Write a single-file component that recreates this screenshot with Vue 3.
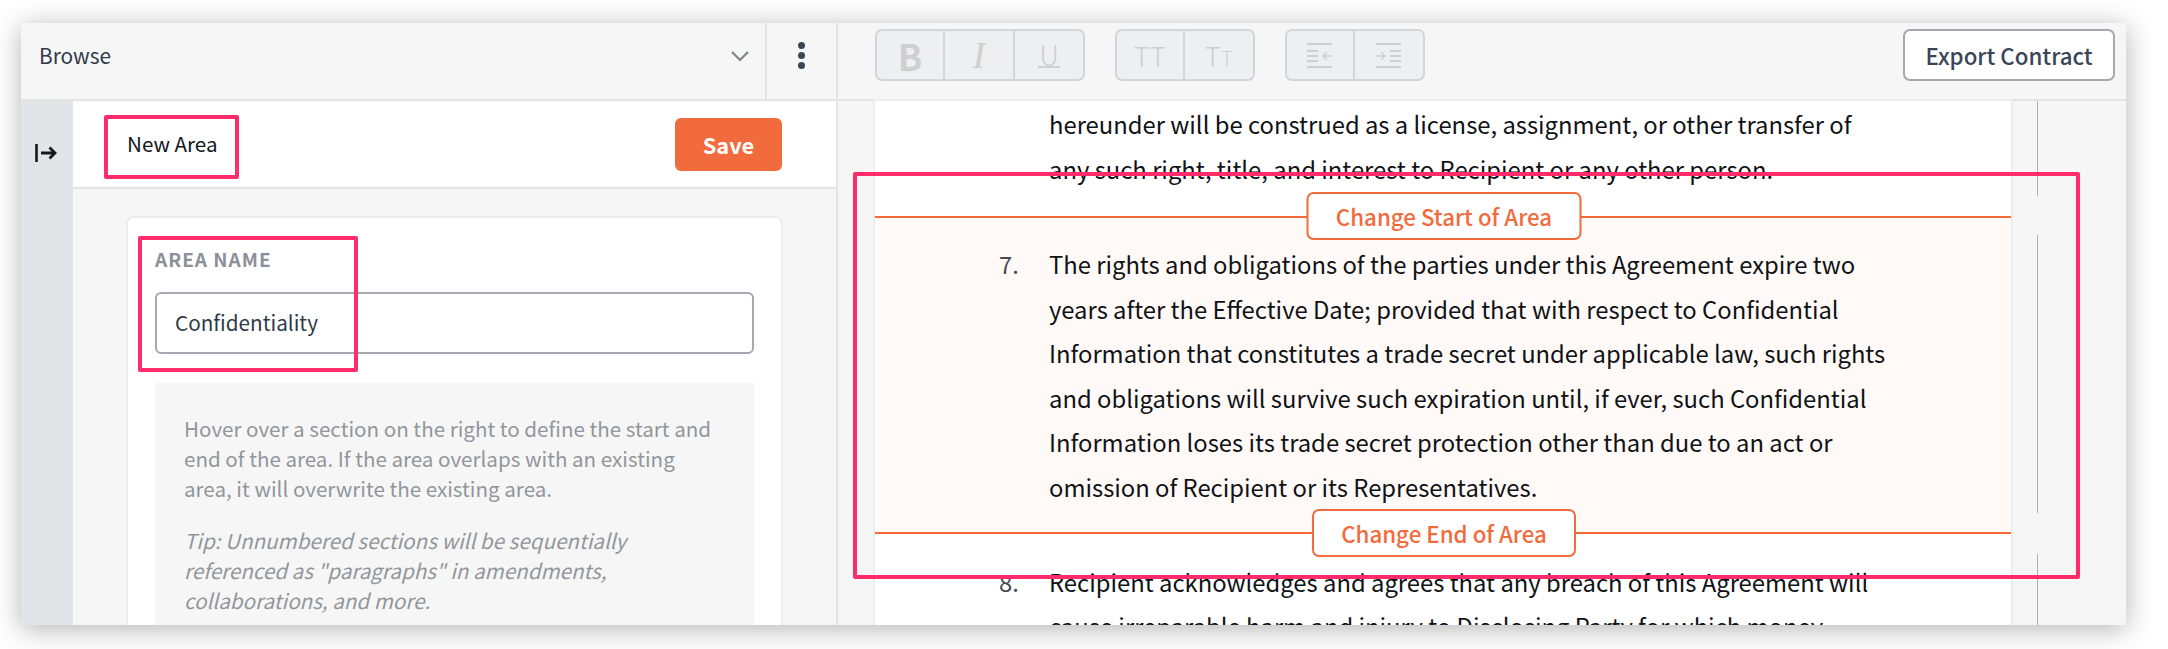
<script setup>
const leadLines = [
  'hereunder will be construed as a license, assignment, or other transfer of',
  'any such right, title, and interest to Recipient or any other person.'
]
const areaLines = [
  'The rights and obligations of the parties under this Agreement expire two',
  'years after the Effective Date; provided that with respect to Confidential',
  'Information that constitutes a trade secret under applicable law, such rights',
  'and obligations will survive such expiration until, if ever, such Confidential',
  'Information loses its trade secret protection other than due to an act or',
  'omission of Recipient or its Representatives.'
]
const nextLines = [
  'Recipient acknowledges and agrees that any breach of this Agreement will',
  'cause irreparable harm and injury to Disclosing Party for which money'
]
</script>

<template>
  <div class="page">
    <div class="window">
      <header class="topbar">
        <div class="browse">
          <span class="browse-label">Browse</span>
          <svg class="chevron" width="18" height="11" viewBox="0 0 18 11"><path d="M1 1l8 8 8-8" fill="none" stroke="#7f848c" stroke-width="2.2" /></svg>
        </div>
        <div class="kebab"><i></i><i></i><i></i></div>
        <div class="toolbar">
          <div class="tools">
            <div class="group">
              <span class="tool t-b">B</span>
              <span class="tool t-i">I</span>
              <span class="tool"><span class="t-u">U</span></span>
            </div>
            <div class="group">
              <span class="tool t-tt">TT</span>
              <span class="tool t-tt">T<small>T</small></span>
            </div>
            <div class="group">
              <span class="tool">
                <svg width="26" height="25" viewBox="0 0 26 25" fill="none" stroke="#cdcfd1" stroke-width="2">
                  <path d="M0 1h25M0 8h11M0 13h11M0 18h11M0 24h25" />
                  <path d="M25 13H16M20 9l-4 4 4 4" stroke-width="1.4" />
                </svg>
              </span>
              <span class="tool">
                <svg width="26" height="25" viewBox="0 0 26 25" fill="none" stroke="#cdcfd1" stroke-width="2">
                  <path d="M0 1h25M14 8h11M14 13h11M14 18h11M0 24h25" />
                  <path d="M0 13h9M5 9l4 4-4 4" stroke-width="1.4" />
                </svg>
              </span>
            </div>
          </div>
          <button class="export">Export Contract</button>
        </div>
      </header>

      <div class="body">
        <aside class="left">
          <div class="rail">
            <svg width="22" height="18" viewBox="0 0 22 18" fill="none" stroke="#15181c">
              <path d="M1.5 0v18" stroke-width="2.6" />
              <path d="M6 9h14M14.5 3.5L20 9l-5.5 5.5" stroke-width="2.8" />
            </svg>
          </div>
          <div class="panel">
            <div class="panel-head">
              <span class="panel-title">New Area</span>
              <button class="save">Save</button>
            </div>
            <div class="panel-body">
              <div class="card">
                <label class="field-label">AREA NAME</label>
                <div class="input">Confidentiality</div>
                <div class="help">
                  <p>Hover over a section on the right to define the start and end of the area. If the area overlaps with an existing area, it will overwrite the existing area.</p>
                  <p class="tip">Tip: Unnumbered sections will be sequentially referenced as "paragraphs" in amendments, collaborations, and more.</p>
                </div>
              </div>
            </div>
          </div>
          <div class="mark mark-title"></div>
          <div class="mark mark-name"></div>
        </aside>

        <main class="doc">
          <div class="paper">
            <div class="para lead">
              <span class="num"></span>
              <div class="lines"><div v-for="l in leadLines" :key="l">{{ l }}</div></div>
            </div>
            <section class="area">
              <button class="area-btn start">Change Start of Area</button>
              <div class="para">
                <span class="num">7.</span>
                <div class="lines"><div v-for="l in areaLines" :key="l">{{ l }}</div></div>
              </div>
              <button class="area-btn end">Change End of Area</button>
            </section>
            <div class="para next">
              <span class="num">8.</span>
              <div class="lines"><div v-for="l in nextLines" :key="l">{{ l }}</div></div>
            </div>
          </div>
          <div class="gutter">
            <span class="rule r1"></span>
            <span class="rule r2"></span>
            <span class="rule r3"></span>
          </div>
          <div class="mark mark-area"></div>
        </main>
      </div>
    </div>
  </div>
</template>

<style>
html, body { margin: 0; background: #fff; }
</style>

<style scoped>
.page {
  width: 2168px;
  height: 649px;
  box-sizing: border-box;
  padding: 23px 42px 24px 21px;
  overflow: hidden;
  font-family: "Noto Sans CJK SC", "Source Sans Pro", "Liberation Sans", sans-serif;
  color: #2f3a4a;
}
.window {
  height: 100%;
  background: #f6f6f6;
  display: flex;
  flex-direction: column;
  box-shadow: 0 4px 26px rgba(0, 0, 0, 0.3);
  overflow: hidden;
}
.topbar {
  height: 76px;
  flex: none;
  display: flex;
  border-bottom: 2px solid #e4e4e4;
}
.browse {
  width: 746px;
  box-sizing: border-box;
  padding: 0 16px 12px 18px;
  display: flex;
  align-items: center;
  justify-content: space-between;
  border-right: 2px solid #e4e4e4;
}
.browse-label { font-size: 20.8px; }
.chevron { margin-top: 2px; }
.kebab {
  width: 71px;
  box-sizing: border-box;
  display: flex;
  flex-direction: column;
  align-items: center;
  justify-content: center;
  gap: 3px;
  border-right: 2px solid #e4e4e4;
  padding-bottom: 12px;
}
.kebab i { width: 7px; height: 7px; border-radius: 50%; background: #3a4556; }
.toolbar {
  flex: 1;
  display: flex;
  align-items: flex-start;
  justify-content: space-between;
  padding: 6px 11px 0 37px;
}
.tools { display: flex; gap: 30px; }
.group {
  display: flex;
  height: 52px;
  box-sizing: border-box;
  border: 2px solid #d3d5d7;
  border-radius: 7px;
  background: #eeeff1;
}
.tool {
  width: 66px;
  box-sizing: border-box;
  display: flex;
  align-items: center;
  justify-content: center;
  color: #cdcfd1;
  line-height: 1;
}
.tool + .tool { width: 70px; border-left: 2px solid #d3d5d7; }
.t-b { font-weight: 700; font-size: 36px; }
.t-i { font-family: "Liberation Serif", serif; font-style: italic; font-size: 37px; }
.t-u {
  font-size: 28px;
  font-weight: 300;
  line-height: 24px;
  height: 24px;
  padding: 0 1px;
  border-bottom: 2px solid #cdcfd1;
}
.t-tt { font-size: 27px; font-weight: 300; letter-spacing: 0.5px; }
.t-tt small { font-size: 20px; align-self: center; margin-top: 5px; }
.export {
  width: 212px;
  height: 52px;
  box-sizing: border-box;
  background: #fff;
  border: 2px solid #a3a9b1;
  border-radius: 7px;
  color: #3a4556;
  font: 500 22.3px "Noto Sans CJK SC", sans-serif;
  padding: 0;
}
.body { flex: 1; min-height: 0; display: flex; }
.left {
  width: 817px;
  flex: none;
  display: flex;
  position: relative;
}
.rail {
  width: 52px;
  flex: none;
  background: #e3e4e8;
  display: flex;
  justify-content: center;
  padding-top: 43px;
  box-sizing: border-box;
}
.rail svg { margin-left: -2px; }
.panel {
  flex: 1;
  display: flex;
  flex-direction: column;
  border-right: 2px solid #e4e4e4;
}
.panel-head {
  height: 86px;
  flex: none;
  background: #fff;
  border-bottom: 2px solid #e4e4e4;
  display: flex;
  align-items: center;
  justify-content: space-between;
  padding: 0 54px 0 54px;
}
.panel-title { font-size: 20.6px; color: #14181d; margin-top: -2px; }
.save {
  width: 107px;
  height: 53px;
  padding: 0;
  border: 0;
  border-radius: 6px;
  background: #f26b3c;
  color: #fff;
  font: 700 21.8px "Noto Sans CJK SC", sans-serif;
}
.panel-body {
  flex: 1;
  min-height: 0;
  padding: 27px 53px 0 53px;
  overflow: hidden;
}
.card {
  height: 100%;
  box-sizing: border-box;
  background: #fff;
  border: 2px solid #ececec;
  border-bottom: 0;
  border-radius: 8px 8px 0 0;
  padding: 26px 27px 0 27px;
}
.field-label {
  display: block;
  font-size: 19px;
  font-weight: 700;
  color: #8b9099;
  letter-spacing: 1px;
  line-height: 30px;
}
.input {
  margin-top: 18px;
  height: 62px;
  box-sizing: border-box;
  border: 2px solid #a3a9b1;
  border-radius: 6px;
  padding: 0 18px 2px;
  display: flex;
  align-items: center;
  font-size: 20.7px;
  color: #2f3a4a;
}
.help {
  margin-top: 29px;
  background: #f6f6f6;
  padding: 30px 29px 0 29px;
  height: 300px;
  font-size: 20.6px;
  line-height: 30px;
  color: #92969c;
}
.help p { margin: 0 0 22px; }
.tip { font-style: italic; }

.doc { flex: 1; min-width: 0; display: flex; position: relative; }
.paper {
  width: 1136px;
  margin-left: 37px;
  flex: none;
  background: #fff;
  box-sizing: border-box;
  box-shadow: 0 0 0 2px #eceded;
  padding-top: 1px;
  overflow: hidden;
  font-size: 23.8px;
  line-height: 44.6px;
  color: #101215;
}
.para { display: flex; }
.num { width: 174px; flex: none; text-align: left; padding-left: 124px; box-sizing: border-box; color: #444a52; }
.lines div { white-space: nowrap; }
.lead { height: 114px; }
.area {
  position: relative;
  background: #fffaf8;
  border-top: 2px solid #f7693a;
  border-bottom: 2px solid #f7693a;
  padding: 24px 0 22px;
}
.area-btn {
  position: absolute;
  left: 50%;
  transform: translateX(-50%);
  height: 48px;
  box-sizing: border-box;
  background: #fff;
  border: 2px solid #f26b3c;
  border-radius: 7px;
  color: #f26b3c;
  font: 500 22.3px "Noto Sans CJK SC", sans-serif;
  padding: 0;
  margin-left: 1px;
}
.start { top: -26px; width: 275px; }
.end { bottom: -25px; width: 264px; }
.next { padding-top: 26px; }
.gutter { flex: 1; position: relative; }
.rule { position: absolute; left: 26px; width: 1px; background: #adb2b8; }
.r1 { top: 0; height: 95px; }
.r2 { top: 134px; height: 278px; }
.r3 { top: 453px; bottom: 0; }

.mark {
  position: absolute;
  box-sizing: border-box;
  border: 4px solid #fe2c6b;
  border-radius: 2px;
  pointer-events: none;
}
.mark-title { left: 83px; top: 14px; width: 135px; height: 64px; }
.mark-name { left: 117px; top: 135px; width: 220px; height: 136px; }
.mark-area { left: 15px; top: 71px; width: 1227px; height: 407px; }
</style>
